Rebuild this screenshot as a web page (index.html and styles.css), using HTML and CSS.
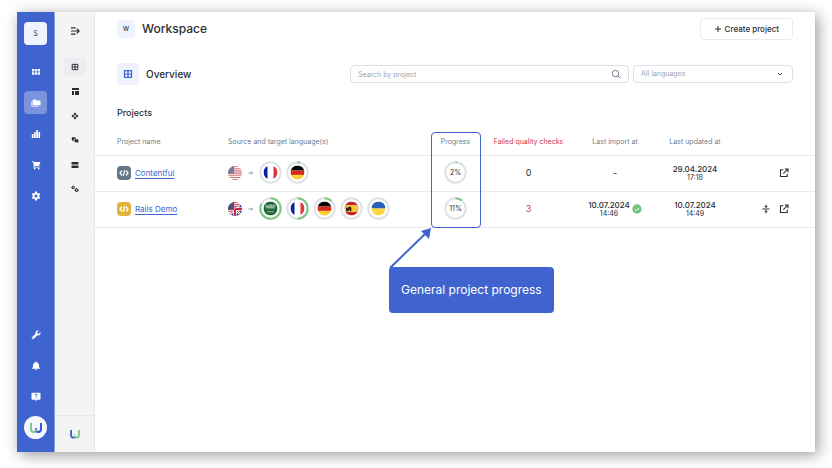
FILE: index.html
```html
<!DOCTYPE html>
<html lang="en">
<head>
<meta charset="utf-8">
<meta name="viewport" content="width=device-width, initial-scale=1">
<title>Workspace</title>
<link rel="stylesheet" href="styles.css">
</head>
<body>
<svg class="defs" aria-hidden="true">
  <defs>
    <clipPath id="round"><circle cx="7" cy="7" r="7"/></clipPath>
    <clipPath id="upper"><path d="M0 0h14L0 14z"/></clipPath>
    <clipPath id="lower"><path d="M14 0v14H0z"/></clipPath>
    <symbol id="stripes" viewBox="0 0 14 14">
      <rect width="14" height="14" fill="#f6eeee"/>
      <path d="M0 .5h14M0 2.700h14M0 4.900h14M0 7.100h14M0 9.300h14M0 11.500h14M0 13.600h14" stroke="#c9434d" stroke-width="1.100"/>
      <rect width="6" height="7.600" fill="#3c4a7d"/>
      <path d="M2 2h3M3 4h3M2 6h3" stroke="#8d96b8" stroke-width=".5" stroke-dasharray=".6 .6"/>
    </symbol>
    <symbol id="flag-us" viewBox="0 0 14 14"><g clip-path="url(#round)"><use href="#stripes" width="14" height="14"/></g></symbol>
    <symbol id="flag-en" viewBox="0 0 14 14"><g clip-path="url(#round)">
      <g clip-path="url(#upper)"><use href="#stripes" width="14" height="14"/></g>
      <g clip-path="url(#lower)">
        <rect width="14" height="14" fill="#1f3a8a"/>
        <path d="M0 0l14 14M14 0L0 14" stroke="#fff" stroke-width="2.400"/>
        <path d="M7 7l7 7M7 7l-7 7M7 7l7-7" stroke="#d03040" stroke-width=".8"/>
        <path d="M7 0v14M0 7h14" stroke="#fff" stroke-width="3.600"/>
        <path d="M7 0v14M0 7h14" stroke="#d0203c" stroke-width="2"/>
      </g></g></symbol>
    <symbol id="flag-fr" viewBox="0 0 14 14"><g clip-path="url(#round)"><rect width="14" height="14" fill="#fff"/><rect width="4" height="14" fill="#10209f"/><rect x="10" width="4" height="14" fill="#e4333f"/></g></symbol>
    <symbol id="flag-de" viewBox="0 0 14 14"><g clip-path="url(#round)"><rect width="14" height="5" fill="#050505"/><rect y="5" width="14" height="4.400" fill="#d52a1c"/><rect y="9.400" width="14" height="5" fill="#fbcf35"/></g></symbol>
    <symbol id="flag-sa" viewBox="0 0 14 14"><g clip-path="url(#round)"><rect width="14" height="14" fill="#22683a"/><path d="M2.500 3v2.600h2V3.600M5.500 3v2.600h1.600V3M8.200 3.200v2.400h1.600V3M11.400 3v2.600M3 6.400h8" fill="none" stroke="#cfe0d4" stroke-width=".8"/><path d="M3.400 10.200h7" stroke="#a9c9b3" stroke-width=".8"/></g></symbol>
    <symbol id="flag-es" viewBox="0 0 14 14"><g clip-path="url(#round)"><rect width="14" height="14" fill="#c42030"/><rect y="3.400" width="14" height="7.200" fill="#f8c43a"/><path d="M1.600 9.800V6.400c0-.8.800-.8 1-.2l.8.500c0-1.600 3-1.900 3.400-.3v3.400H5.400V8.300l-1 .2v1.300z" fill="#2a1a12"/><path d="M2.800 8.600l2-1.600" stroke="#c42030" stroke-width=".6"/></g></symbol>
    <symbol id="flag-ua" viewBox="0 0 14 14"><g clip-path="url(#round)"><rect width="14" height="7" fill="#2860b8"/><rect y="7" width="14" height="7" fill="#fbd740"/></g></symbol>
    <symbol id="i-table" viewBox="0 0 10 10"><path d="M1.500 1.700h7v6.600h-7zM5 1.700v6.600M1.500 5h7" fill="none" stroke="currentColor" stroke-width="1.200" stroke-linejoin="round"/></symbol>
    <symbol id="i-code" viewBox="0 0 14 14"><path d="M4.700 5L2.900 7l1.800 2M9.300 5l1.800 2-1.800 2M7.700 4.500L6.300 9.500" fill="none" stroke="#fff" stroke-width="1.200" stroke-linecap="round" stroke-linejoin="round"/></symbol>
    <symbol id="i-arrow" viewBox="0 0 6 6"><path d="M1 3h4M3.500 1.500L5 3 3.500 4.500" fill="none" stroke="#7b8794" stroke-width=".8"/></symbol>
    <symbol id="i-open" viewBox="0 0 10 10"><path d="M4.300 1.800H1.500v6.700h6.700V5.700M5.800 1h3.200v3.200M8.800 1.200L4.300 5.700" fill="none" stroke="currentColor" stroke-width="1.100"/></symbol>
  </defs>
</svg>

<div class="app">
  <nav class="rail" aria-label="Main">
    <button class="rail-item rail-team">S</button>
    <div class="rail-group">
      <button class="rail-item" aria-label="Dashboard"><svg viewBox="0 0 10 10"><path d="M1 2h2.200v2.500H1zM3.900 2h2.200v2.500H3.900zM6.800 2H9v2.500H6.800zM1 5.300h2.200v2.500H1zM3.900 5.300h2.200v2.500H3.900zM6.800 5.300H9v2.500H6.800z"/></svg></button>
      <button class="rail-item rail-active" aria-label="Projects"><svg viewBox="0 0 10 10"><path d="M2.300 1.600h2.300l.8.900h3.500q.7 0 .7.700v3.300q0 .7-.7.700H2.300q-.7 0-.7-.7V2.300q0-.7.700-.7z"/><path d="M.7 3.500v4q0 .7.700.7h6" fill="none" stroke="currentColor" stroke-width=".8"/></svg></button>
      <button class="rail-item" aria-label="Statistics"><svg viewBox="0 0 10 10"><path d="M.8 5h1.700v4H.8zM3 3.200h1.700V9H3zM5.200 1h1.700v8H5.200zM7.400 3h1.700v6H7.400z"/></svg></button>
      <button class="rail-item" aria-label="Orders"><svg viewBox="0 0 10 10"><path d="M.7 1h1.600l.4 1h6.700L8.200 6H3.700l-.3.700h5.100v.8H2.500l-.2-.5.600-1.200L1.800 1.800H.7z"/><circle cx="3.600" cy="8.500" r=".9"/><circle cx="7.700" cy="8.500" r=".9"/></svg></button>
      <button class="rail-item" aria-label="Settings"><svg viewBox="0 0 10 10"><path fill-rule="evenodd" d="M4.100.6h1.800l.3 1.300.8.500 1.300-.4.900 1.500-1 .9v1.100l1 .9-.9 1.600-1.300-.4-.8.500-.3 1.300H4.100l-.3-1.300-.8-.5-1.300.4L.8 6.400l1-.9V4.400l-1-.9L1.700 2l1.300.4.800-.5zM5 3.500a1.500 1.500 0 100 3 1.500 1.500 0 000-3z"/></svg></button>
    </div>
    <div class="rail-group rail-bottom">
      <button class="rail-item" aria-label="Tools"><svg viewBox="0 0 10 10"><path d="M9.300 2.300L7.800 3.800l-1.400-.2-.2-1.400L7.700.7C6.500.3 5.200.7 4.700 1.900c-.2.600-.2 1.200 0 1.700L.9 7.400c-.8 1.100.6 2.500 1.700 1.700l3.800-3.800c1.900.7 3.800-1.100 2.900-3zM2 7.600a.5.5 0 110 1 .5.500 0 010-1z"/></svg></button>
      <button class="rail-item" aria-label="Notifications"><svg viewBox="0 0 10 10"><path d="M5 .5q.6 0 .7.700C7.300 1.600 7.900 2.800 7.900 4.300c0 1.500.3 2 1 2.700v.8H1.100V7c.7-.7 1-1.200 1-2.700 0-1.500.6-2.700 2.200-3.100Q4.400.5 5 .5zM4 8.300h2q-.1 1-1 1t-1-1z"/></svg></button>
      <button class="rail-item" aria-label="Help"><svg viewBox="0 0 10 10"><path d="M1.100.8h7.800q.6 0 .6.600v5.700q0 .6-.6.600H6L4.200 9.300V7.700H1.100q-.6 0-.6-.6V1.400q0-.6.600-.6z"/><path d="M3.900 3q.1-.9 1.100-.9t1.100.8Q6.100 3.500 5 4.200v.6M5 5.600v.8" fill="none" stroke="#4064cf" stroke-width=".9"/></svg></button>
      <button class="rail-item rail-user" aria-label="Account"><svg viewBox="0 0 14 14" stroke-width="2"><path d="M2 2v6q0 3 3 3 2 0 2-2" stroke="#7cc88a"/><path d="M12 2v6q0 3-3 3-1 0-1.600-.8" stroke="#3558c4"/><circle cx="7" cy="8" r="1" fill="#3558c4"/></svg></button>
    </div>
  </nav>

  <nav class="side" aria-label="Workspace sections">
    <button class="side-item side-toggle" aria-label="Expand menu"><svg class="outline" viewBox="0 0 10 10" stroke-width="1.200"><path d="M1 1.800h4.500M1 5h8M1 8.200h4.500M6.800 2.700L9.100 5 6.800 7.300"/></svg></button>
    <div class="side-group">
      <button class="side-item side-active" aria-label="Overview"><svg><use href="#i-table"/></svg></button>
      <button class="side-item" aria-label="Layout"><svg viewBox="0 0 8 8"><path d="M1 1h7v2H1zM1 4h2v4H1zM4 4h4v4H4z"/></svg></button>
      <button class="side-item" aria-label="Components"><svg viewBox="0 0 10 10"><path d="M5 .6l1.900 1.900L5 4.400 3.100 2.500zM5 5.600l1.900 1.900L5 9.400 3.100 7.500zM2.500 3.100L4.400 5 2.500 6.900.6 5zM7.500 3.100L9.400 5 7.500 6.900 5.600 5z"/></svg></button>
      <button class="side-item" aria-label="Discussions"><svg viewBox="0 0 10 10"><path d="M1.700 1.500h3.600q.7 0 .7.700v1.300H4.500q-.9 0-.9.900v1.100H2.700L1.300 6.300V5.400Q1 5.300 1 4.800V2.200q0-.7.700-.7z"/><path d="M5 4.200h3.600q.7 0 .7.700v2.300q0 .6-.4.700v.9L7.500 7.900H5q-.7 0-.7-.7V4.900q0-.7.700-.7z"/></svg></button>
      <button class="side-item" aria-label="Storage"><svg viewBox="0 0 8 8"><path d="M1 1h6q.500 0 .5.500V3q0 .5-.5.500H1Q.5 3.500.5 3V1.500Q.5 1 1 1zM1 4.500h6q.5 0 .5.500v1.500q0 .5-.5.500H1q-.5 0-.5-.5V5q0-.5.500-.5z"/></svg></button>
      <button class="side-item" aria-label="Automation"><svg class="outline" viewBox="0 0 10 10" stroke-width="1.300"><circle cx="2.800" cy="3.200" r="1.400"/><circle cx="7" cy="6.600" r="1.600"/><path d="M.6 3.200h.8M2.800 1v.8M7 4.200V5M8.600 6.600h.9M4.600 6.600h.8"/></svg></button>
    </div>
    <div class="side-foot"><svg viewBox="0 0 14 14" fill="none" stroke-width="2.600"><path d="M12.500 1.500v7q0 3.500-3 3.500-2.500 0-2.500-2" stroke="#7cc88a"/><path d="M1.500 1.500v7q0 3.500 3 3.500 1.200 0 2-.8" stroke="#3c62cc"/><circle cx="7" cy="8" r="1" fill="#7cc88a"/></svg></div>
  </nav>

  <main class="main">
    <header class="topbar">
      <span class="badge">W</span>
      <h1 class="title">Workspace</h1>
      <button class="create"><svg viewBox="0 0 8 8"><path d="M4 1v6M1 4h6" stroke="currentColor"/></svg>Create project</button>
    </header>

    <div class="filters">
      <div class="section">
        <span class="badge badge-large"><svg><use href="#i-table"/></svg></span>
        <h2 class="section-title">Overview</h2>
      </div>
      <div class="field">
        <input class="control" type="text" placeholder="Search by project" aria-label="Search by project">
        <svg class="field-icon" viewBox="0 0 10 10" fill="none" stroke="#6d7a8c"><circle cx="4.500" cy="4.500" r="3.200"/><path d="M7 7l2.200 2.200"/></svg>
      </div>
      <div class="field">
        <select class="control" aria-label="Languages"><option>All languages</option></select>
        <svg class="field-icon" viewBox="0 0 10 10" fill="none" stroke="#555f6b"><path d="M3 4l2 2 2-2"/></svg>
      </div>
    </div>

    <h3 class="list-title">Projects</h3>
    <table class="projects">
      <colgroup><col class="c-name"><col><col class="c-progress"><col class="c-failed"><col class="c-import"><col class="c-update"><col class="c-actions"></colgroup>
      <thead>
        <tr>
          <th class="first" scope="col">Project name</th>
          <th class="left" scope="col">Source and target language(s)</th>
          <th class="progress-head" scope="col">Progress
            <span class="highlight"></span>
            <svg class="pointer" viewBox="0 0 44 42"><path d="M1 41L36 7" stroke="#4064cf" stroke-width="2"/><path d="M42 1l-2 11-8-8z" fill="#4064cf"/></svg>
            <span class="callout">General project progress</span>
          </th>
          <th class="danger" scope="col">Failed quality checks</th>
          <th scope="col">Last import at</th>
          <th scope="col">Last updated at</th>
          <td></td>
        </tr>
      </thead>
      <tbody>
        <tr>
          <td class="first"><div class="name"><span class="logo logo-slate"><svg><use href="#i-code"/></svg></span><a href="#">Contentful</a></div></td>
          <td><div class="langs">
            <svg class="source faded"><use href="#flag-us"/></svg><svg class="to"><use href="#i-arrow"/></svg>
            <svg class="ring" viewBox="0 0 23 23"><circle class="track" cx="11.500" cy="11.500" r="10.200"/><use href="#flag-fr" x="4.500" y="4.500" width="14" height="14"/></svg>
            <svg class="ring" viewBox="0 0 23 23"><circle class="track" cx="11.500" cy="11.500" r="10.200"/><circle class="value" cx="11.500" cy="11.500" r="10.200" pathLength="100" stroke-dasharray="4 96"/><use href="#flag-de" x="4.500" y="4.500" width="14" height="14"/></svg>
          </div></td>
          <td><div class="gauge"><svg class="ring" viewBox="0 0 23 23"><circle class="track" cx="11.500" cy="11.500" r="10.200"/><circle class="value" cx="11.500" cy="11.500" r="10.200" pathLength="100" stroke-dasharray="2 98"/></svg><span>2%</span></div></td>
          <td class="count">0</td>
          <td class="count">-</td>
          <td><span class="date">29.04.2024</span><span class="time">17:18</span></td>
          <td><div class="actions"><button aria-label="Open Contentful"><svg><use href="#i-open"/></svg></button></div></td>
        </tr>
        <tr>
          <td class="first"><div class="name"><span class="logo logo-gold"><svg><use href="#i-code"/></svg></span><a href="#">Rails Demo</a></div></td>
          <td><div class="langs">
            <svg class="source"><use href="#flag-en"/></svg><svg class="to"><use href="#i-arrow"/></svg>
            <svg class="ring" viewBox="0 0 23 23"><circle class="track" cx="11.500" cy="11.500" r="10.200"/><circle class="value" cx="11.500" cy="11.500" r="10.200" pathLength="100" stroke-dasharray="83 17"/><use href="#flag-sa" x="4.500" y="4.500" width="14" height="14"/></svg>
            <svg class="ring" viewBox="0 0 23 23"><circle class="track" cx="11.500" cy="11.500" r="10.200"/><circle class="value" cx="11.500" cy="11.500" r="10.200" pathLength="100" stroke-dasharray="50 50"/><use href="#flag-fr" x="4.500" y="4.500" width="14" height="14"/></svg>
            <svg class="ring" viewBox="0 0 23 23"><circle class="track" cx="11.500" cy="11.500" r="10.200"/><circle class="value" cx="11.500" cy="11.500" r="10.200" pathLength="100" stroke-dasharray="12 88"/><use href="#flag-de" x="4.500" y="4.500" width="14" height="14"/></svg>
            <svg class="ring" viewBox="0 0 23 23"><circle class="track" cx="11.500" cy="11.500" r="10.200"/><use href="#flag-es" x="4.500" y="4.500" width="14" height="14"/></svg>
            <svg class="ring" viewBox="0 0 23 23"><circle class="track" cx="11.500" cy="11.500" r="10.200"/><use href="#flag-ua" x="4.500" y="4.500" width="14" height="14"/></svg>
          </div></td>
          <td><div class="gauge"><svg class="ring" viewBox="0 0 23 23"><circle class="track" cx="11.500" cy="11.500" r="10.200"/><circle class="value" cx="11.500" cy="11.500" r="10.200" pathLength="100" stroke-dasharray="11 89"/></svg><span>11%</span></div></td>
          <td class="count danger">3</td>
          <td><div class="import"><div><span class="date">10.07.2024</span><span class="time">14:46</span></div><svg viewBox="0 0 10 10"><circle cx="5" cy="5" r="4.700" fill="#76c483"/><path d="M3 5.100l1.500 1.400L7.200 3.800" fill="none" stroke="#fff"/></svg></div></td>
          <td><span class="date">10.07.2024</span><span class="time">14:49</span></td>
          <td><div class="actions"><button aria-label="Collapse"><svg viewBox="0 0 10 10"><path d="M1.500 5h7M5 .7v2M5 9.300v-2" stroke="currentColor" stroke-width="1.100"/><path d="M3.200 2.200h3.600L5 4zM3.200 7.800h3.600L5 6z" fill="currentColor"/></svg></button><button aria-label="Open Rails Demo"><svg><use href="#i-open"/></svg></button></div></td>
        </tr>
      </tbody>
    </table>
  </main>
</div>
</body>
</html>
```

FILE: styles.css
```css
* { box-sizing: border-box; }

body {
  margin: 0;
  min-height: 100vh;
  padding: 12px 17px 16px;
  display: flex;
  background: #fff;
  color: #2a2d33;
  font: 8px/12px Inter, "Liberation Sans", sans-serif;
}

button {
  padding: 0;
  border: 0;
  background: none;
  color: inherit;
  font: inherit;
  cursor: pointer;
}

svg { display: block; }
h1, h2, h3 { margin: 0; font-weight: 500; }
.defs { position: absolute; width: 0; height: 0; }

.app {
  flex: 1;
  display: flex;
  background: #fff;
  box-shadow: 3px 3px 14px rgba(0, 0, 0, 0.4);
}

/* Main navigation */
.rail {
  flex: 0 0 38px;
  padding: 10px 0 13px;
  display: flex;
  flex-direction: column;
  align-items: center;
  gap: 15px;
  border-right: 1px solid #8ea4e2;
  background: #4064cf;
  color: #fff;
}

.rail-group { display: flex; flex-direction: column; gap: 8px; }
.rail-bottom { margin-top: auto; }

.rail-item {
  width: 23px;
  height: 23px;
  display: flex;
  align-items: center;
  justify-content: center;
  border-radius: 4px;
}

.rail-item svg { width: 10px; height: 10px; fill: currentColor; }
.rail-team { background: #eff3fe; color: #3c414a; font-size: 7px; }
.rail-active { background: #7a94de; }
.rail-user { border-radius: 50%; background: #f4f7fd; }
.rail-item.rail-user svg { width: 14px; height: 14px; fill: none; }

/* Section navigation */
.side {
  flex: 0 0 40px;
  padding-top: 10px;
  display: flex;
  flex-direction: column;
  align-items: center;
  background: #f4f4f4;
  border-right: 1px solid #e6e8ea;
}

.side-group {
  height: 140px;
  margin-top: 18px;
  display: flex;
  flex-direction: column;
  justify-content: space-between;
}

.side-item {
  width: 22px;
  height: 18px;
  display: flex;
  align-items: center;
  justify-content: center;
  border-radius: 4px;
}

.side-item svg { width: 8px; height: 8px; fill: currentColor; }
.side-item.side-toggle svg { width: 10px; height: 10px; }
.side-item svg.outline { fill: none; stroke: currentColor; }
.side-active { background: #ebedf0; }

.side-foot {
  align-self: stretch;
  height: 37px;
  margin-top: auto;
  display: flex;
  align-items: center;
  justify-content: center;
  border-top: 1px solid #e6e8ea;
}

.side-foot svg { width: 10px; height: 10px; }

/* Page content */
.main { flex: 1; min-width: 0; }

.topbar {
  padding: 6px 22px 0;
  display: flex;
  align-items: center;
  gap: 7px;
}

.badge {
  width: 18px;
  height: 18px;
  display: flex;
  align-items: center;
  justify-content: center;
  border-radius: 4px;
  background: #eff3fe;
  font-size: 6px;
  font-weight: 500;
}

.badge-large { width: 22px; height: 22px; color: #4064cf; }
.badge svg { width: 10px; height: 10px; }
.title { font-size: 12px; line-height: 18px; }

.create {
  height: 22px;
  margin-left: auto;
  padding: 0 13px;
  display: flex;
  align-items: center;
  gap: 3px;
  border: 1px solid #e8eaee;
  border-radius: 4px;
  font-weight: 500;
}

.create svg { width: 8px; height: 8px; }

.filters {
  padding: 23px 22px 0;
  display: grid;
  grid-template-columns: 229px 1fr 160px;
  align-items: center;
  gap: 4px;
}

.section { display: flex; align-items: center; gap: 7px; }
.section-title { font-size: 10px; line-height: 14px; }
.field { position: relative; }

.control {
  display: block;
  width: 100%;
  height: 18px;
  padding: 0 24px 0 7px;
  appearance: none;
  border: 1px solid #dcdfe6;
  border-radius: 4px;
  background: #fff;
  color: #9aa5b3;
  font: 7px/16px Inter, "Liberation Sans", sans-serif;
}

.control::placeholder { color: #9aa5b3; opacity: 1; }

.field-icon {
  position: absolute;
  top: 4px;
  right: 8px;
  width: 10px;
  height: 10px;
  pointer-events: none;
}

.list-title { padding: 22px 22px 11px; font-size: 9px; line-height: 12px; }

/* Projects table */
.projects {
  width: 100%;
  table-layout: fixed;
  border-collapse: separate;
  border-spacing: 0;
  text-align: center;
}

.c-name { width: 133px; }
.c-progress { width: 49px; }
.c-failed { width: 97px; }
.c-import { width: 76px; }
.c-update { width: 84px; }
.c-actions { width: 78px; }

.projects th,
.projects td {
  height: 36px;
  padding: 0 0 2px;
  border-bottom: 1px solid #e8eaec;
}

.projects thead th,
.projects thead td {
  height: 26px;
  color: #6f7d8f;
  font-size: 7px;
  font-weight: 400;
}

.projects .first { padding-left: 22px; text-align: left; }
.projects .left { text-align: left; }
.projects .danger { color: #cf3a41; }
.projects .count { font-size: 9px; }

.name { display: flex; align-items: center; gap: 4px; }

.name a {
  color: #4064cf;
  text-decoration: underline;
  text-underline-offset: 2px;
}

.logo { width: 14px; height: 14px; border-radius: 4px; }
.logo svg { width: 14px; height: 14px; }
.logo-slate { background: #65758a; }
.logo-gold { background: #e2b33a; }

.langs { display: flex; align-items: center; gap: 4px; }
.source { width: 14px; height: 14px; }
.faded { opacity: 0.75; }
.to { width: 9px; height: 6px; }
.ring { width: 23px; height: 23px; }
.track { fill: none; stroke: #dde2e7; stroke-width: 2; }

.value {
  fill: none;
  stroke: #7cc888;
  stroke-width: 2;
  transform: rotate(-90deg);
  transform-origin: center;
}

.gauge { display: grid; place-items: center; font-size: 7px; }
.gauge > * { grid-area: 1 / 1; }

.date, .time { display: block; }
.date { font-weight: 500; line-height: 10px; }
.time { font-size: 7px; line-height: 8px; }

.import { display: flex; align-items: center; justify-content: center; gap: 2px; }
.import svg { width: 10px; height: 10px; }

.actions {
  padding-right: 26px;
  display: flex;
  justify-content: flex-end;
  gap: 8px;
}

.actions svg { width: 10px; height: 10px; }

/* Annotation over the progress column */
.progress-head { position: relative; }

.highlight {
  position: absolute;
  top: 2px;
  left: 0;
  width: 50px;
  height: 96px;
  border: 1px solid #4064cf;
  border-radius: 4px;
  pointer-events: none;
}

.pointer {
  position: absolute;
  top: 97px;
  left: -42px;
  width: 44px;
  height: 42px;
}

.callout {
  position: absolute;
  top: 137px;
  left: -42px;
  padding: 15px 12px;
  border-radius: 4px;
  background: #4064cf;
  color: #fff;
  font-size: 12px;
  line-height: 16px;
  white-space: nowrap;
}
```
